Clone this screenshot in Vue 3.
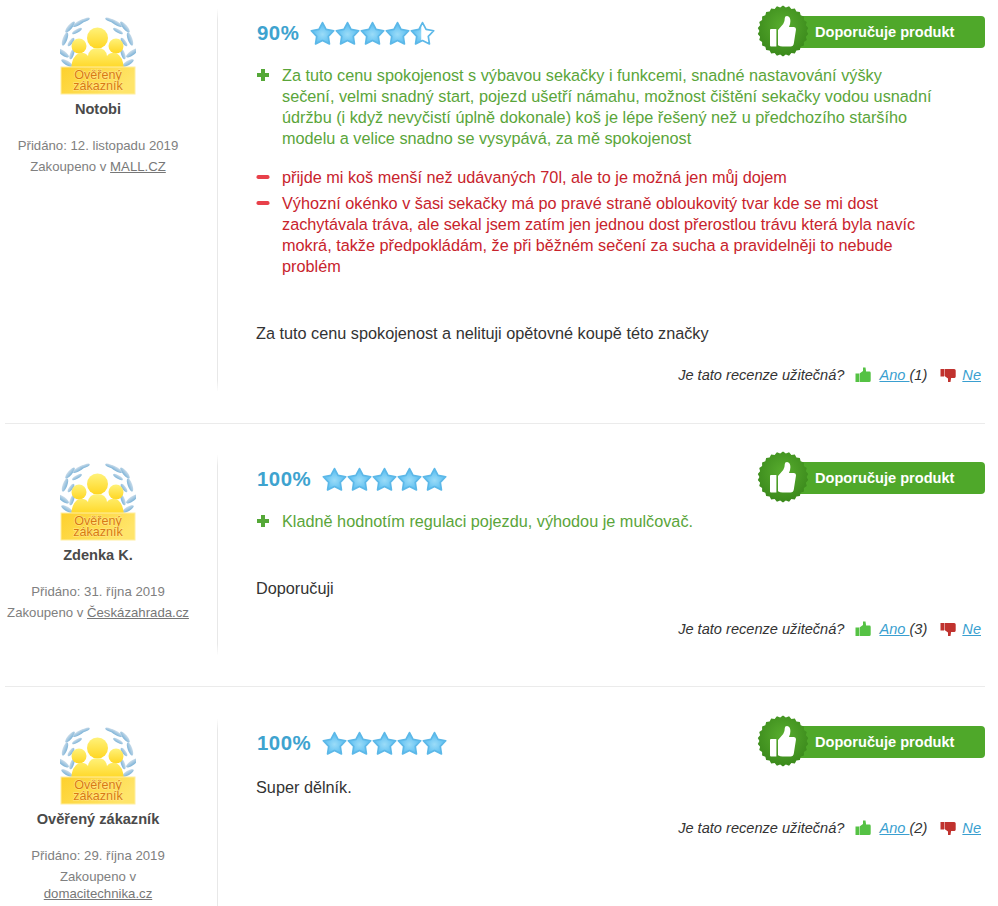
<script setup>
const seal = (() => {
  const pts = []
  const n = 26
  for (let i = 0; i < n * 2; i++) {
    const r = i % 2 ? 23.6 : 25.4
    const a = (Math.PI * i) / n
    pts.push((26 + r * Math.sin(a)).toFixed(2) + ',' + (26 - r * Math.cos(a)).toFixed(2))
  }
  return pts.join(' ')
})()

const starPath = (() => {
  let d = ''
  for (let i = 0; i < 10; i++) {
    const r = i % 2 ? 6.1 : 11.8
    const a = (Math.PI * i) / 5
    d += (i ? 'L' : 'M') + (12.5 + r * Math.sin(a)).toFixed(2) + ' ' + (13.4 - r * Math.cos(a)).toFixed(2) + ' '
  }
  return d + 'Z'
})()

const leaves = [
  [7, 46, 6.5, 2.2, 30],
  [3, 36, 7, 2.3, 35],
  [12, 37, 5.5, 1.9, -70],
  [5, 22, 7, 2.3, -70],
  [11, 25, 5, 1.9, -55],
  [10, 10, 7, 2.2, -50],
  [19, 6, 7, 2, -30],
  [17, 14, 5.5, 1.8, -30],
  [25, 3, 5, 1.6, -20]
]

const reviews = [
  {
    name: 'Notobi', added: '12. listopadu 2019', shop: 'MALL.CZ', score: 90, fill: [1, 1, 1, 1, 0.45],
    pros: ['Za tuto cenu spokojenost s výbavou sekačky i funkcemi, snadné nastavování výšky sečení, velmi snadný start, pojezd ušetří námahu, možnost čištění sekačky vodou usnadní údržbu (i když nevyčistí úplně dokonale) koš je lépe řešený než u předchozího staršího modelu a velice snadno se vysypává, za mě spokojenost'],
    cons: ['přijde mi koš menší než udávaných 70l, ale to je možná jen můj dojem', 'Výhozní okénko v šasi sekačky má po pravé straně obloukovitý tvar kde se mi dost zachytávala tráva, ale sekal jsem zatím jen jednou dost přerostlou trávu která byla navíc mokrá, takže předpokládám, že při běžném sečení za sucha a pravidelněji to nebude problém'],
    text: 'Za tuto cenu spokojenost a nelituji opětovné koupě této značky', votes: 1, cls: 'first'
  },
  {
    name: 'Zdenka K.', added: '31. října 2019', shop: 'Českázahrada.cz', score: 100, fill: [1, 1, 1, 1, 1],
    pros: ['Kladně hodnotím regulaci pojezdu, výhodou je mulčovač.'], cons: [],
    text: 'Doporučuji', votes: 3, cls: 'second'
  },
  {
    name: 'Ověřený zákazník', added: '29. října 2019', shop: 'domacitechnika.cz', score: 100, fill: [1, 1, 1, 1, 1],
    pros: [], cons: [], text: 'Super dělník.', votes: 2, cls: 'third'
  }
]
</script>

<template>
  <div class="page">
    <article v-for="(r, ri) in reviews" :key="r.name" class="review" :class="r.cls">
      <aside class="author">
        <svg class="badge" width="76" height="78" viewBox="0 0 76 78">
          <defs>
            <linearGradient id="gold" x1="0" y1="0" x2="0" y2="1">
              <stop offset="0" stop-color="#fff27a" />
              <stop offset="1" stop-color="#ffd622" />
            </linearGradient>
            <linearGradient id="plate" x1="0" y1="0" x2="1" y2="0.4">
              <stop offset="0" stop-color="#fdd02c" />
              <stop offset="1" stop-color="#ffe56a" />
            </linearGradient>
            <linearGradient id="leaf" x1="0" y1="0" x2="0" y2="1">
              <stop offset="0" stop-color="#cadcea" />
              <stop offset="1" stop-color="#7eb4d8" />
            </linearGradient>
          </defs>
          <g fill="url(#leaf)">
            <ellipse v-for="(l, i) in leaves" :key="'l' + i" :cx="l[0]" :cy="l[1]" :rx="l[2]" :ry="l[3]" :transform="`rotate(${l[4]} ${l[0]} ${l[1]})`" />
          </g>
          <g fill="url(#leaf)" transform="matrix(-1 0 0 1 75 0)">
            <ellipse v-for="(l, i) in leaves" :key="'r' + i" :cx="l[0]" :cy="l[1]" :rx="l[2]" :ry="l[3]" :transform="`rotate(${l[4]} ${l[0]} ${l[1]})`" />
          </g>
          <circle cx="19" cy="29" r="7.5" fill="url(#gold)" />
          <circle cx="56" cy="29" r="7.5" fill="url(#gold)" />
          <circle cx="37.5" cy="21" r="10.5" fill="url(#gold)" />
          <path d="M11 52 q1 -13 8 -16 q6 -1 9 3 q1 -8 9.5 -8 q8.5 0 9.5 8 q3 -4 9 -3 q7 3 8 16z" fill="url(#gold)" />
          <rect x="1" y="50" width="74" height="27" fill="url(#plate)" stroke="#ffeea0" />
          <text class="plate-text" x="38" y="62" text-anchor="middle">Ověřený</text>
          <text class="plate-text" x="38" y="73" text-anchor="middle">zákazník</text>
        </svg>
        <div class="name">{{ r.name }}</div>
        <div class="meta first-meta">Přidáno: {{ r.added }}</div>
        <div class="meta">Zakoupeno v <a href="#" class="shop">{{ r.shop }}</a></div>
      </aside>

      <section class="body">
        <header class="head">
          <span class="score">{{ r.score }}%</span>
          <span class="stars">
            <svg v-for="(f, i) in r.fill" :key="i" width="25" height="25" viewBox="0 0 25 25">
              <defs>
                <radialGradient :id="`st${ri}${i}`" cx="0.5" cy="0.55" r="0.5">
                  <stop offset="0" stop-color="#9bdcf8" />
                  <stop offset="1" stop-color="#58bcf0" />
                </radialGradient>
                <clipPath :id="`cl${ri}${i}`"><rect x="0" y="0" :width="25 * f" height="25" /></clipPath>
              </defs>
              <path :d="starPath" fill="#fff" />
              <path :d="starPath" :fill="`url(#st${ri}${i})`" :clip-path="`url(#cl${ri}${i})`" />
              <path :d="starPath" fill="none" stroke="#5cb8e8" stroke-width="1.7" stroke-linejoin="round" />
            </svg>
          </span>
          <span class="recommend">
            <svg class="seal" width="52" height="52" viewBox="0 0 52 52">
              <defs>
                <radialGradient id="sealg" cx="0.5" cy="0.4" r="0.65">
                  <stop offset="0" stop-color="#58ad2e" />
                  <stop offset="1" stop-color="#38861a" />
                </radialGradient>
              </defs>
              <polygon :points="seal" fill="url(#sealg)" />
              <path d="M14 24 h5.4 v17.5 h-5.4 a1 1 0 0 1 -1 -1 v-15.5 a1 1 0 0 1 1 -1z" fill="#fff" />
              <path d="M21 25 l5.2 -6 q1.6 -2.2 1.6 -6 q0 -2 2.2 -2 q3.4 .4 3.4 5 q0 3.2 -1.4 6 h5 q2.2 .3 2 2.6 l-2.2 14 q-.4 3 -3.2 3 h-8 q-2.4 0 -4.6 -1.4z" fill="#fff" />
            </svg>
            <span class="rec-label">Doporučuje produkt</span>
          </span>
        </header>

        <ul v-if="r.pros.length" class="list pros">
          <li v-for="p in r.pros" :key="p">
            <svg class="mark" width="14" height="14" viewBox="0 0 14 14"><path d="M5 1 h4 v4 h4 v4 h-4 v4 h-4 v-4 h-4 v-4 h4z" fill="#55a838" /></svg>
            <span>{{ p }}</span>
          </li>
        </ul>
        <ul v-if="r.cons.length" class="list cons">
          <li v-for="c in r.cons" :key="c">
            <svg class="mark" width="14" height="14" viewBox="0 0 14 14"><rect x="0.5" y="5" width="13" height="4" rx="1.8" fill="#e8404a" /></svg>
            <span>{{ c }}</span>
          </li>
        </ul>

        <p class="text">{{ r.text }}</p>

        <footer class="useful">
          <span>Je tato recenze užitečná?</span>
          <svg class="vote-icon up" width="16" height="16" viewBox="0 0 16 16"><path d="M0.5 6.5 h3.5 v8.5 h-3.5z M4.5 6.5 l3.5 -2.5 v-3.5 h2.5 l.6 4 h3.4 q1.2 0 1.2 1.4 v7.6 q0 1.5 -1.5 1.5 h-9.7z" fill="#55c244" /></svg>
          <a href="#" class="vote">Ano </a><span class="count">({{ r.votes }})</span>
          <svg class="vote-icon down" width="16" height="16" viewBox="0 0 16 16"><path d="M0.5 2 h3.5 v7.5 h-3.5z M4.5 2 h9.7 q1.5 0 1.5 1.5 v6 q0 1.4 -1.2 1.4 h-3.4 l-.6 4 h-2.5 v-3.5 l-3.5 -2.5z" fill="#c0322e" /></svg>
          <a href="#" class="vote">Ne</a>
        </footer>
      </section>
    </article>
  </div>
</template>

<style>
html, body { margin: 0; background: #fff; overflow: hidden; }
</style>

<style scoped>
.page {
  width: 980px;
  margin-left: 5px;
  font-family: "Liberation Sans", Arial, sans-serif;
  color: #333;
}
.review {
  display: flex;
  padding: 36px 0 37px;
  border-bottom: 1px solid #ebebeb;
}
.review.first { padding-top: 14px; padding-bottom: 37px; }
.review.second { padding-bottom: 36px; }
.review.third { border-bottom: 0; padding-top: 37px; }
.author {
  box-sizing: border-box;
  width: 213px;
  flex: none;
  margin: -5px 0;
  padding: 5px 26px 34px 0;
  border-right: 1px solid #e8e8e8;
  border-image: linear-gradient(to bottom, transparent, #e8e8e8 12px, #e8e8e8 calc(100% - 12px), transparent) 1;
  text-align: center;
  font-size: 13.2px;
  color: #808080;
}
.badge { display: block; margin: 3px auto 0; }
.plate-text {
  font: 12.6px "Liberation Sans", Arial, sans-serif;
  fill: #d97a10;
  stroke: #ffe98a;
  stroke-width: 1px;
  paint-order: stroke;
}
.name {
  font-size: 14.6px;
  font-weight: bold;
  color: #4a4a4a;
  line-height: 18px;
  margin-top: 5px;
}
.meta { line-height: 17px; margin-top: 4px; }
.first-meta { margin-top: 19px; }
.shop { color: #777; text-decoration: underline; }
.body { flex: 1; min-width: 0; padding-left: 38px; display: flex; flex-direction: column; }
.head { display: flex; align-items: center; height: 38px; }
.score { font-size: 20.4px; font-weight: bold; color: #3ea3cf; padding-left: 1px; letter-spacing: 0.5px; }
.stars { display: flex; margin-left: 11px; }
.stars svg { display: block; }
.recommend { margin-left: auto; margin-top: -2px; position: relative; display: flex; align-items: center; height: 32px; width: 228px; }
.seal { position: absolute; left: 0; top: -11px; }
.rec-label {
  flex: 1;
  height: 32px;
  margin-left: 25px;
  padding-left: 33px;
  background: #4fa82a;
  border-radius: 4px;
  color: #fff;
  font-size: 14.6px;
  font-weight: bold;
  line-height: 32px;
}
.list { list-style: none; margin: 0; padding: 0; font-size: 16.25px; line-height: 21px; }
.list li { display: flex; gap: 12px; padding-right: 52px; margin-bottom: 5px; }
.list .mark { flex: none; margin-top: 3px; }
.pros { color: #5aa53a; margin-top: 13px; }
.cons { color: #c8232c; margin-top: 13px; }
.text { margin: 0; font-size: 16.25px; line-height: 21px; }
.useful {
  display: flex;
  justify-content: flex-end;
  align-items: center;
  font-size: 14.6px;
  font-style: italic;
  margin-top: 22px;
  padding-bottom: 3px;
  padding-right: 4px;
}
.first .useful { margin-top: 23px; }
.vote { color: #3a9fd0; text-decoration: underline; white-space: pre; }
.vote-icon { flex: none; }
.vote-icon.up { margin: 0 8px 0 11px; }
.vote-icon.down { margin: 0 6px 0 13px; }
.first .text, .second .text { margin-top: 41px; }
.third .text { margin-top: 15px; }
</style>
